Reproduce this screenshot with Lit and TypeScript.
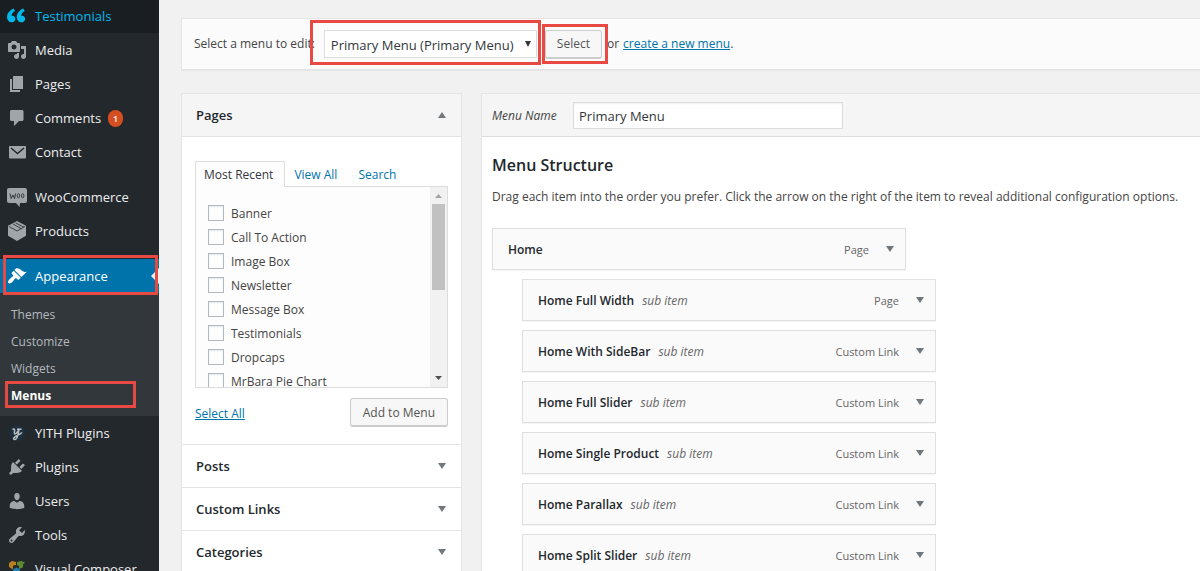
import { LitElement, html, svg, css, nothing } from "lit";
import { customElement, property } from "lit/decorators.js";
import { classMap } from "lit/directives/class-map.js";

const icons: Record<string, unknown> = {
  quote: svg`<path transform="translate(-2.4 -1)" d="M10.8 14c0-.9-.3-1.700-.8-2.300-.7-.9-2-1-2.900-.8-.3-1.900 1.100-3.800 3.400-4.900L8.900 3.400C5.700 4.900 2 8.100 2.500 12.700 2.900 15.500 4.500 17.300 6.800 17.300c1 0 2-.3 2.800-.9.8-.7 1.200-1.500 1.200-2.400zm9.700 0c0-.9-.3-1.700-.8-2.300-.7-.9-2-1-2.900-.8-.3-1.900 1.100-3.800 3.400-4.900l-1.600-2.600c-3.200 1.500-6.900 4.700-6.400 9.300.4 2.800 2 4.600 4.300 4.600 1 0 2-.3 2.800-.9.800-.7 1.200-1.500 1.200-2.400z"/>`,
  media: svg`<path d="M13 11V4c0-.55-.45-1-1-1h-1.670L9 1H5L3.670 3H2c-.55 0-1 .45-1 1v7c0 .55.45 1 1 1h10c.55 0 1-.45 1-1zM7 4.500c1.380 0 2.500 1.120 2.500 2.500S8.380 9.500 7 9.500 4.500 8.380 4.500 7 5.620 4.500 7 4.500zM14 6h5v10.500c0 1.380-1.120 2.500-2.500 2.500S14 17.880 14 16.500s1.120-2.500 2.500-2.500c.17 0 .34.02.5.05V9h-3V6zm-4 8.050V13h2v3.500c0 1.380-1.120 2.500-2.500 2.500S7 17.880 7 16.500 8.120 14 9.500 14c.17 0 .34.02.5.05z"/>`,
  page: svg`<path d="M6 15V2h10v13H6zm-1 1h8v2H3V5h2v11z"/>`,
  comment: svg`<path d="M4.500 2h10.500c.8 0 1.500.7 1.500 1.500v8c0 .8-.7 1.500-1.500 1.500h-3l-5 5v-5H4.500C3.700 13 3 12.300 3 11.500v-8C3 2.700 3.700 2 4.500 2z"/>`,
  email: svg`<path d="M3 4h15c.5 0 1 .5 1 1v10.500c0 .5-.5 1-1 1H3c-.5 0-1-.5-1-1V5c0-.5.5-1 1-1z"/><path d="M4 6l6.500 5.500L17 6" fill="none" stroke="#23282d" stroke-width="1.500"/>`,
  woo: svg`<path d="M2 1h16c1.100 0 2 .9 2 2v11c0 1.100-.9 2-2 2h-5l-.5 4L9 16H2c-1.100 0-2-.9-2-2V3c0-1.100.9-2 2-2z"/><path d="M3 6.500l1.200 5L6 8l1.600 3.500L8.500 6.500" fill="none" stroke="#23282d" stroke-width=".9"/><ellipse cx="11.400" cy="8.800" rx="1.200" ry="2.100" fill="none" stroke="#23282d" stroke-width=".8"/><ellipse cx="15.700" cy="8.800" rx="1.200" ry="2.100" fill="none" stroke="#23282d" stroke-width=".8"/>`,
  box: svg`<path d="M10 0l9 4.800v10L10 20 1 14.800v-10z"/><path d="M2 5.500l8 4.500 8-4.500M6 3l8.500 4.800M8.500 1.800L17 6.300" fill="none" stroke="#23282d" stroke-width=".8"/>`,
  brush: svg`<path d="M14.480 11.060L7.410 3.990l1.500-1.500c.5-.56 2.300-.47 3.510.32 1.210.8 1.430 1.280 2.910 2.100 1.180.64 2.450 1.260 4.450.85zm-.71.71L6.700 4.700 4.930 6.470c-.39.39-.39 1.020 0 1.410l1.060 1.060c.39.39.39 1.030 0 1.420-.6.6-1.430 1.110-2.210 1.690-.35.26-.7.53-1.010.84C1.430 14.230.4 16.080 1.400 17.070c.99 1 2.840-.03 4.180-1.360.31-.31.58-.66.85-1.020.57-.78 1.080-1.610 1.690-2.210.39-.39 1.020-.39 1.410 0l1.060 1.060c.39.39 1.020.39 1.410 0z"/>`,
  yith: svg`<circle cx="10" cy="10" r="8" fill="#1f2f3d"/><path d="M5.500 6.500c2-1 2.500 0 2 2s0 3 1.500 2 2.500-3 3-5c-.5 4-1 8.500-3 10.500-1.500 1.200-3 0-2-1.300 1.500-2 5-2.500 8-5.200M10 6.300h4.500" fill="none" stroke="#b9bdc1" stroke-width="1.500"/>`,
  plug: svg`<path d="M13.110 4.360L9.870 7.600 8 5.730l3.240-3.240c.35-.34 1.050-.2 1.560.32.52.51.66 1.210.31 1.550zm-8 1.770l.91-1.120 9.010 9.010-1.190.84c-.71.71-2.630 1.160-3.820 1.160H6.140L4.900 17.260c-.59.59-1.540.59-2.120 0-.59-.58-.59-1.530 0-2.120l1.240-1.240v-3.880c0-1.130.4-3.190 1.090-3.890zm7.260 3.970l3.240-3.240c.34-.35 1.040-.21 1.550.31.52.51.66 1.210.31 1.550l-3.240 3.250z"/>`,
  user: svg`<path d="M10 9.250c-2.270 0-2.730-3.440-2.730-3.440C7 4.020 7.820 2 9.970 2c2.160 0 2.980 2.020 2.710 3.810 0 0-.41 3.440-2.680 3.440zm0 2.570L12.720 10c2.390 0 4.520 2.330 4.520 4.530v2.490s-3.650 1.130-7.240 1.130c-3.650 0-7.240-1.130-7.240-1.130v-2.490c0-2.250 1.940-4.480 4.470-4.480z"/>`,
  wrench: svg`<path d="M16.680 9.770c-1.340 1.340-3.300 1.670-4.950.99l-5.410 6.520c-.99.99-2.590.99-3.580 0s-.99-2.590 0-3.570l6.520-5.420c-.68-1.650-.35-3.610.99-4.950 1.280-1.280 3.120-1.620 4.720-1.060l-2.890 2.890 2.820 2.820 2.860-2.870c.53 1.580.18 3.390-1.080 4.650zM3.810 16.210c.4.39 1.040.39 1.430 0 .4-.4.4-1.040 0-1.430-.39-.4-1.030-.4-1.430 0-.39.39-.39 1.030 0 1.430z"/>`,
  composer: svg`<path d="M2 4l3-2 4 1v3l-3 .5v4L2 8z" fill="#b8801f"/><path d="M10 3l4-1 4 1.500-2 2v3L12 10V7l-2-1z" fill="#5f8a2c"/><path d="M6 10.500L9.500 8.500 13 10.500v4l-3.500 2-3.500-2z" fill="#1e7fb4"/>`,
};

interface NavItem {
  label: string;
  icon: string;
  badge?: number;
  hover?: boolean;
  gap?: boolean;
  children?: string[];
}

const nav: NavItem[] = [
  { label: "Testimonials", icon: "quote", hover: true },
  { label: "Media", icon: "media" },
  { label: "Pages", icon: "page" },
  { label: "Comments", icon: "comment", badge: 1 },
  { label: "Contact", icon: "email" },
  { label: "WooCommerce", icon: "woo", gap: true },
  { label: "Products", icon: "box" },
  { label: "Appearance", icon: "brush", gap: true, children: ["Themes", "Customize", "Widgets", "Menus"] },
  { label: "YITH Plugins", icon: "yith" },
  { label: "Plugins", icon: "plug" },
  { label: "Users", icon: "user" },
  { label: "Tools", icon: "wrench" },
  { label: "Visual Composer", icon: "composer" },
];

@customElement("admin-nav")
export class AdminNav extends LitElement {
  static styles = css`
    :host { display: block; flex: none; width: 159px; background: #23282d; }
    ul { list-style: none; margin: 0; padding: 0; }
    .top { margin-top: -1px; }
    .gap { margin-top: 11px; }
    .link {
      position: relative; display: flex; align-items: center; gap: 8px;
      height: 34px; padding-left: 7px; color: #eee; text-decoration: none;
      font-size: 13px; line-height: 18px; white-space: nowrap;
    }
    .icon { width: 20px; height: 20px; flex: none; fill: #a0a5aa; }
    .hover { background: #191e23; color: #00b9eb; }
    .hover .icon { fill: #00b9eb; }
    .current { background: #0073aa; color: #fff; }
    .current .icon { fill: #fff; }
    .current::after {
      content: ""; position: absolute; right: 0; top: 9px;
      border: 8px solid transparent; border-right-color: #f1f1f1; border-left-width: 0;
    }
    .badge {
      min-width: 15px; height: 17px; border-radius: 9px; margin-left: -1px;
      background: #d54e21; color: #fff; font-size: 9px; font-weight: 600; line-height: 17px; text-align: center;
    }
    .sub { background: #32373c; padding: 8px 0 7px; }
    .sublink {
      position: relative; display: block; padding: 0 11px; color: #b4b9be;
      text-decoration: none; font-size: 12px; line-height: 27px;
    }
    .active { color: #fff; font-weight: 700; }
    .mark { position: absolute; border: 3px solid #e84a43; pointer-events: none; z-index: 2; }
    .mark-parent { inset: -4px 1px -2px 3px; }
    .mark-child { inset: -1px 23px 1px 5px; }
  `;

  render() {
    return html`<nav aria-label="Admin"><ul class="top">
      ${nav.map((n) => html`<li class=${classMap({ gap: !!n.gap })}>
        <a href="#" class=${classMap({ link: true, hover: !!n.hover, current: !!n.children })}>
          <svg class="icon" viewBox="0 0 20 20" aria-hidden="true">${icons[n.icon]}</svg>
          <span>${n.label}</span>
          ${n.badge ? html`<span class="badge">${n.badge}</span>` : nothing}
          ${n.children ? html`<span class="mark mark-parent"></span>` : nothing}
        </a>
        ${n.children ? html`<ul class="sub">${n.children.map((c) => {
          const active = c === "Menus";
          return html`<li><a href="#" class=${classMap({ sublink: true, active })}>${c}${active ? html`<span class="mark mark-child"></span>` : nothing}</a></li>`;
        })}</ul>` : nothing}
      </li>`)}
    </ul></nav>`;
  }
}

@customElement("menu-item")
export class MenuItem extends LitElement {
  @property() label = "";
  @property() type = "";
  @property({ type: Boolean, reflect: true }) sub = false;

  static styles = css`
    :host { display: block; width: 414px; margin-bottom: 9px; }
    :host([sub]) { margin-left: 30px; }
    .bar {
      box-sizing: border-box; display: flex; align-items: center; height: 42px; padding: 0 5px 0 15px;
      background: #fafafa; border: 1px solid #dfdfdf; box-shadow: 0 1px 1px rgba(0,0,0,.04);
      font-size: 12px; line-height: 20px; white-space: nowrap;
    }
    .title, .hint, .type { padding-top: 2px; }
    .title { color: #23282d; font-weight: 600; }
    .hint { margin-left: 8px; color: #666; font-style: italic; }
    .type { margin-left: auto; color: #666; font-size: 11px; }
    .toggle { display: grid; place-items: center; width: 20px; height: 20px; margin-left: 11px; padding: 0; border: 0; background: none; }
    svg { width: 10px; height: 10px; fill: #72777c; }
  `;

  render() {
    return html`<div class="bar">
      <span class="title">${this.label}</span>
      ${this.sub ? html`<span class="hint">sub item</span>` : nothing}
      <span class="type">${this.type}</span>
      <button class="toggle" aria-label="Edit ${this.label}"><svg viewBox="0 0 10 10"><path d="M1 2h8L5 8z"/></svg></button>
    </div>`;
  }
}

const recent = ["Banner", "Call To Action", "Image Box", "Newsletter", "Message Box", "Testimonials", "Dropcaps", "MrBara Pie Chart"];
const structure = ["Home With SideBar", "Home Full Slider", "Home Single Product", "Home Parallax", "Home Split Slider"];

@customElement("app-root")
export class AppRoot extends LitElement {
  static styles = css`
    :host {
      display: flex; height: 100vh; overflow: hidden; background: #f1f1f1; color: #444;
      font-family: "Open Sans", "Noto Sans", sans-serif; font-size: 12px; line-height: 18px;
    }
    * { box-sizing: border-box; }
    a { color: #0073aa; }
    h2, h3, p, ul { margin: 0; padding: 0; }
    ul { list-style: none; }
    button, input, select { font-family: inherit; color: inherit; }
    main { flex: 1; min-width: 0; padding: 18px 0 0 22px; }
    .manage {
      display: flex; align-items: center; height: 52px; padding-left: 12px; white-space: nowrap;
      background: #fbfbfb; border: 1px solid #e5e5e5; border-right: 0; box-shadow: 0 1px 1px rgba(0,0,0,.04);
    }
    .marked { position: relative; display: flex; align-items: center; }
    .mark { position: absolute; border: 3px solid #e84a43; pointer-events: none; }
    .mark-select { inset: -10px -4px -7px -14px; }
    .mark-button { inset: -6px -6px -5px -3px; }
    .picker { width: 213px; margin-left: 9px; }
    .picker select {
      appearance: none; width: 100%; height: 28px; padding: 2px 20px 0 6px; margin: 0;
      background: #fff; border: 1px solid #ddd; border-radius: 0; color: #32373c; font-size: 13px;
    }
    .caret { position: absolute; right: 5px; top: 10px; width: 8px; height: 8px; fill: #32373c; pointer-events: none; }
    .choose { margin: 0 5px 0 8px; }
    .btn {
      height: 29px; padding: 0 11px; background: #f7f7f7; border: 1px solid #ccc; border-bottom-width: 2px;
      border-radius: 3px; color: #555; font-size: 12px; white-space: nowrap;
    }
    .or { margin-right: 4px; }
    .columns { display: flex; align-items: flex-start; gap: 19px; margin-top: 23px; }
    .side { flex: none; width: 281px; background: #fff; border: 1px solid #e5e5e5; }
    .head {
      display: flex; align-items: center; justify-content: space-between; height: 43px; padding: 0 14px;
      border-bottom: 1px solid #e5e5e5; color: #23282d; font-size: 13px; font-weight: 600;
    }
    .open { background: #f5f5f5; }
    .fold { display: grid; place-items: center; width: 10px; height: 20px; padding: 0; border: 0; background: none; }
    .fold svg { width: 10px; height: 10px; fill: #72777c; }
    .body { padding: 24px 13px 17px; border-bottom: 1px solid #e5e5e5; }
    .tabs { display: flex; align-items: flex-end; margin-bottom: -1px; }
    .tab { height: 26px; padding: 4px 11px 0 8px; text-decoration: none; border: 1px solid transparent; border-bottom: 0; white-space: nowrap; }
    .tab-on { position: relative; background: #fdfdfd; border-color: #ddd; color: #32373c; }
    .panel { display: flex; height: 202px; overflow: hidden; background: #fdfdfd; border: 1px solid #ddd; }
    .checks { flex: 1; padding: 14px 12px 0; }
    .check { display: flex; align-items: center; gap: 7px; height: 24px; white-space: nowrap; }
    .check span { padding-top: 2px; }
    .check input {
      appearance: none; width: 16px; height: 16px; margin: 0; background: #fff; border: 1px solid #b4b9be;
      box-shadow: inset 0 1px 2px rgba(0,0,0,.1);
    }
    .scroll { display: flex; flex-direction: column; align-items: center; width: 17px; background: #f1f1f1; }
    .scroll svg { width: 17px; height: 17px; }
    .thumb { width: 13px; height: 86px; background: #c1c1c1; }
    .rest { flex: 1; }
    .actions { display: flex; align-items: center; justify-content: space-between; margin-top: 10px; }
    .actions a { padding-top: 2px; }
    .actions .btn { padding: 0 12px; }
    .edit { flex: 1; min-width: 0; background: #fff; border: 1px solid #e5e5e5; border-right: 0; }
    .name { display: flex; align-items: center; gap: 11px; height: 43px; padding-left: 10px; background: #f5f5f5; border-bottom: 1px solid #ddd; }
    .name label { min-width: 70px; padding-top: 2px; font-style: italic; }
    .name input {
      width: 270px; height: 27px; padding: 2px 5px 0; margin: 0; background: #fff; border: 1px solid #ddd;
      box-shadow: inset 0 1px 2px rgba(0,0,0,.07); color: #32373c; font-size: 13px;
    }
    .structure { padding: 17px 0 0 10px; }
    .structure h3 { color: #23282d; font-size: 16px; font-weight: 600; line-height: 22px; }
    .structure p { margin: 12px 0 22px; line-height: 18px; white-space: nowrap; }
  `;

  private section(title: string, open = false) {
    return html`<h2 class=${classMap({ head: true, open })}>${title}
      <button class="fold" aria-label="Toggle ${title}"><svg viewBox="0 0 10 10"><path d=${open ? "M1 8h8L5 2z" : "M1 2h8L5 8z"} /></svg></button>
    </h2>`;
  }

  render() {
    return html`
      <admin-nav></admin-nav>
      <main>
        <div class="manage">
          <label for="menu">Select a menu to edit:</label>
          <div class="marked picker">
            <select id="menu"><option>Primary Menu (Primary Menu)</option></select>
            <svg class="caret" viewBox="0 0 8 8"><path d="M1 1h6L4 7z"/></svg>
            <span class="mark mark-select"></span>
          </div>
          <div class="marked choose"><button class="btn">Select</button><span class="mark mark-button"></span></div>
          <span class="or">or</span><a href="#">create a new menu</a>.
        </div>
        <div class="columns">
          <aside class="side">
            ${this.section("Pages", true)}
            <div class="body">
              <div class="tabs">
                <a href="#" class="tab tab-on">Most Recent</a><a href="#" class="tab">View All</a><a href="#" class="tab">Search</a>
              </div>
              <div class="panel">
                <ul class="checks">${recent.map((r) => html`<li><label class="check"><input type="checkbox" /><span>${r}</span></label></li>`)}</ul>
                <div class="scroll" aria-hidden="true">
                  <svg viewBox="0 0 17 17" fill="#a3a3a3"><path d="M5 11h7L8.500 7z"/></svg>
                  <span class="thumb"></span><span class="rest"></span>
                  <svg viewBox="0 0 17 17" fill="#505050"><path d="M5 6h7L8.500 10z"/></svg>
                </div>
              </div>
              <div class="actions"><a href="#">Select All</a><button class="btn">Add to Menu</button></div>
            </div>
            ${["Posts", "Custom Links", "Categories"].map((s) => this.section(s))}
          </aside>
          <section class="edit">
            <div class="name"><label for="name">Menu Name</label><input id="name" type="text" .value=${"Primary Menu"} /></div>
            <div class="structure">
              <h3>Menu Structure</h3>
              <p>Drag each item into the order you prefer. Click the arrow on the right of the item to reveal additional configuration options.</p>
              <menu-item label="Home" type="Page"></menu-item>
              <menu-item sub label="Home Full Width" type="Page"></menu-item>
              ${structure.map((s) => html`<menu-item sub label=${s} type="Custom Link"></menu-item>`)}
            </div>
          </section>
        </div>
      </main>
    `;
  }
}
